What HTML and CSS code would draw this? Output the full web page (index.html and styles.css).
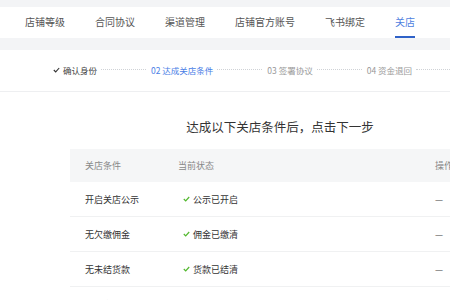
FILE: index.html
```html
<!DOCTYPE html>
<html lang="zh-CN">
<head>
  <meta charset="UTF-8">
  <title>关店</title>
  <link rel="stylesheet" href="styles.css">
</head>
<body>
  <nav class="tabs">
    <div class="tab">店铺等级</div>
    <div class="tab">合同协议</div>
    <div class="tab">渠道管理</div>
    <div class="tab">店铺官方账号</div>
    <div class="tab">飞书绑定</div>
    <div class="tab active">关店</div>
  </nav>

  <div class="panel">
    <div class="steps">
      <div class="step done">
        <svg class="step-check" width="7" height="6" viewBox="0 0 7 6"><polyline points="0.8,3 2.7,4.9 6.2,1" fill="none" stroke="#333" stroke-width="1.1"/></svg>
        确认身份
      </div>
      <div class="step-line"></div>
      <div class="step current">02 达成关店条件</div>
      <div class="step-line"></div>
      <div class="step">03 签署协议</div>
      <div class="step-line"></div>
      <div class="step">04 资金退回</div>
      <div class="step-line last"></div>
    </div>

    <div class="content">
      <h2 class="title">达成以下关店条件后，点击下一步</h2>
      <div class="table">
        <div class="row head">
          <div class="cell">关店条件</div>
          <div class="cell">当前状态</div>
          <div class="cell">操作</div>
        </div>
        <div class="row">
          <div class="cell">开启关店公示</div>
          <div class="cell status"><svg class="ok" width="7" height="6" viewBox="0 0 7 6"><polyline points="0.8,3 2.7,4.9 6.2,1" fill="none" stroke="#52b82e" stroke-width="1.2"/></svg>公示已开启</div>
          <div class="cell dash">—</div>
        </div>
        <div class="row">
          <div class="cell">无欠缴佣金</div>
          <div class="cell status"><svg class="ok" width="7" height="6" viewBox="0 0 7 6"><polyline points="0.8,3 2.7,4.9 6.2,1" fill="none" stroke="#52b82e" stroke-width="1.2"/></svg>佣金已缴清</div>
          <div class="cell dash">—</div>
        </div>
        <div class="row">
          <div class="cell">无未结货款</div>
          <div class="cell status"><svg class="ok" width="7" height="6" viewBox="0 0 7 6"><polyline points="0.8,3 2.7,4.9 6.2,1" fill="none" stroke="#52b82e" stroke-width="1.2"/></svg>货款已结清</div>
          <div class="cell dash">—</div>
        </div>
        <div class="row faded">
          <div class="cell">无未完结售后订单</div>
          <div class="cell status"><svg class="ok" width="7" height="6" viewBox="0 0 7 6"><polyline points="0.8,3 2.7,4.9 6.2,1" fill="none" stroke="#b8e0a8" stroke-width="1.2"/></svg>售后已处理</div>
          <div class="cell dash">—</div>
        </div>
      </div>
    </div>
  </div>
</body>
</html>
```

FILE: styles.css
```css
body {
  margin: 0;
  width: 450px;
  height: 300px;
  overflow: hidden;
  background-color: #f3f4f6;
  font-family: "Noto Sans CJK SC", "Noto Sans", sans-serif;
  color: #333;
}
.tabs {
  display: flex;
  gap: 30px;
  margin-top: 7px;
  padding-left: 25px;
  height: 31px;
  background-color: #fff;
}
.tab {
  box-sizing: border-box;
  height: 31px;
  line-height: 29px;
  font-size: 10px;
  color: #555;
  border-bottom: 2px solid transparent;
  white-space: nowrap;
}
.tab.active {
  color: #4f7fe0;
  border-bottom-color: #2f62c8;
}
.panel {
  margin-top: 12px;
  background-color: #fff;
  height: 260px;
}
.steps {
  display: flex;
  align-items: center;
  box-sizing: border-box;
  height: 42px;
  padding: 0 0 2px 53px;
  border-bottom: 1px solid #eeeff1;
}
.step {
  display: flex;
  align-items: center;
  font-size: 8.5px;
  color: #999;
  white-space: nowrap;
}
.step.done {
  color: #444;
}
.step.current {
  color: #4a7ee6;
}
.step-check {
  margin-right: 3px;
}
.step-line {
  width: 45px;
  margin: 0 5px 0 4px;
  border-top: 1px dotted #cfd2d6;
}
.step-line.last {
  flex: 1;
  margin-right: 0;
}
.content {
  margin-left: 70px;
  width: 420px;
}
.title {
  margin: 27px 0 14px;
  font-size: 12.5px;
  font-weight: normal;
  line-height: 16px;
  text-align: center;
  color: #333;
}
.row {
  display: grid;
  grid-template-columns: 108px 257px 1fr;
  box-sizing: border-box;
  height: 35px;
  align-items: center;
  border-bottom: 1px solid #f0f1f2;
  font-size: 9px;
  color: #333;
}
.row.head {
  height: 33px;
  background-color: #f5f6f7;
  border-bottom: none;
  color: #888;
}
.row.faded {
  color: #d0d0d0;
}
.cell {
  white-space: nowrap;
}
.cell:first-child {
  padding-left: 15px;
}
.status {
  display: flex;
  align-items: center;
  padding-left: 5px;
}
.ok {
  margin-right: 3px;
}
.dash {
  color: #555;
}
```
